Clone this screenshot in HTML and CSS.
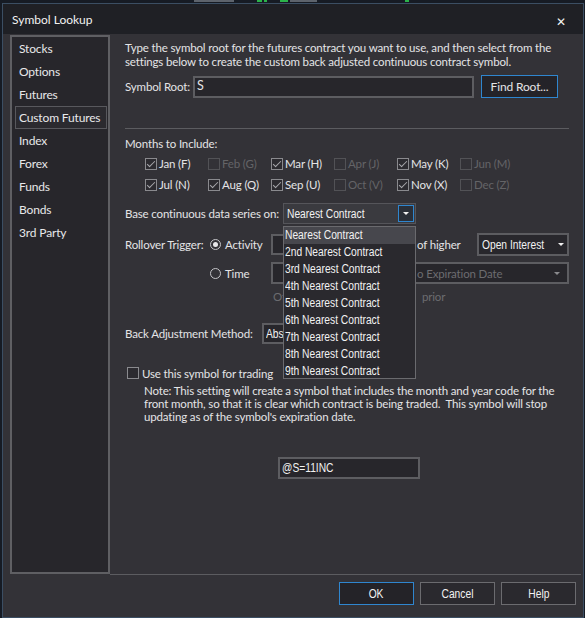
FILE: index.html
```html
<!DOCTYPE html>
<html>
<head>
<meta charset="utf-8">
<link rel="stylesheet" href="styles.css">
</head>
<body>
<div class="chart">
  <i class="g1"></i><i class="gr1"></i><i class="gr2"></i><i class="gr3"></i><i class="g2"></i><i class="gr4"></i>
</div>
<div class="dialog">
  <div class="titlebar">
    <span class="title">Symbol Lookup</span>
    <span class="close">✕</span>
  </div>
  <div class="wrap">
    <div class="main">
      <ul class="nav">
        <li>Stocks</li>
        <li>Options</li>
        <li>Futures</li>
        <li class="sel">Custom Futures</li>
        <li>Index</li>
        <li>Forex</li>
        <li>Funds</li>
        <li>Bonds</li>
        <li>3rd Party</li>
      </ul>
      <div class="content">
        <p class="intro">Type the symbol root for the futures contract you want to use, and then select from the<br>settings below to create the custom back adjusted continuous contract symbol.</p>
        <div class="row root-row">
          <span class="lbl-root">Symbol Root:</span>
          <div class="input root-input">S</div>
          <div class="btn btn-blue find">Find Root...</div>
        </div>
        <div class="sep"></div>
        <div class="months-lbl">Months to Include:</div>
        <div class="months">
          <div class="cbi"><span class="cb on"></span>Jan (F)</div>
          <div class="cbi dis"><span class="cb"></span>Feb (G)</div>
          <div class="cbi"><span class="cb on"></span>Mar (H)</div>
          <div class="cbi dis"><span class="cb"></span>Apr (J)</div>
          <div class="cbi"><span class="cb on"></span>May (K)</div>
          <div class="cbi dis"><span class="cb"></span>Jun (M)</div>
          <div class="cbi"><span class="cb on"></span>Jul (N)</div>
          <div class="cbi"><span class="cb on"></span>Aug (Q)</div>
          <div class="cbi"><span class="cb on"></span>Sep (U)</div>
          <div class="cbi dis"><span class="cb"></span>Oct (V)</div>
          <div class="cbi"><span class="cb on"></span>Nov (X)</div>
          <div class="cbi dis"><span class="cb"></span>Dec (Z)</div>
        </div>
        <div class="row base-row">
          <span class="lbl-base">Base continuous data series on:</span>
          <div class="select base-select">
            <span class="nf">Nearest Contract</span>
            <span class="drop-btn"><i class="arrow"></i></span>
          </div>
        </div>
        <div class="row roll-row">
          <span class="lbl-roll">Rollover Trigger:</span>
          <span class="radio-item"><span class="radio on"></span>Activity</span>
          <div class="input act-box"></div>
          <span class="ofhigher">of higher</span>
          <div class="select oi-select"><span class="nf">Open Interest</span><i class="arrow"></i></div>
        </div>
        <div class="row time-row">
          <span class="radio-item"><span class="radio"></span>Time</span>
          <div class="input time-box"><span class="dim">o Expiration Date</span><i class="arrow dim-arrow"></i></div>
        </div>
        <div class="row of-row">
          <span class="dim of">Of</span><span class="dim prior">prior</span>
        </div>
        <div class="row back-row">
          <span class="lbl-back">Back Adjustment Method:</span>
          <div class="input back-box"><span class="nf">Abs</span></div>
        </div>
        <div class="row use-row">
          <span class="cb"></span><span class="use-lbl">Use this symbol for trading</span>
        </div>
        <p class="note">Note: This setting will create a symbol that includes the month and year code for the<br>front month, so that it is clear which contract is being traded.&nbsp; This symbol will stop<br>updating as of the symbol's expiration date.</p>
        <div class="input sym-box"><span class="nf">@S=11INC</span></div>

        <ul class="dropdown">
          <li class="hl"><span class="nf">Nearest Contract</span></li>
          <li><span class="nf">2nd Nearest Contract</span></li>
          <li><span class="nf">3rd Nearest Contract</span></li>
          <li><span class="nf">4th Nearest Contract</span></li>
          <li><span class="nf">5th Nearest Contract</span></li>
          <li><span class="nf">6th Nearest Contract</span></li>
          <li><span class="nf">7th Nearest Contract</span></li>
          <li><span class="nf">8th Nearest Contract</span></li>
          <li><span class="nf">9th Nearest Contract</span></li>
        </ul>
      </div>
    </div>
    <div class="footer">
      <div class="btn btn-blue fbtn"><span class="nf">OK</span></div>
      <div class="btn fbtn"><span class="nf">Cancel</span></div>
      <div class="btn fbtn"><span class="nf">Help</span></div>
    </div>
  </div>
</div>
</body>
</html>
```
FILE: styles.css
```css
* { box-sizing: border-box; }
html, body { margin: 0; padding: 0; }
body {
  width: 585px;
  height: 618px;
  overflow: hidden;
  background: #161b24;
  font-family: Lato, "Liberation Sans", sans-serif;
  font-size: 11.5px;
  letter-spacing: -0.15px;
  color: #e4e4e6;
  white-space: nowrap;
}

.chart { height: 3px; display: flex; align-items: flex-start; padding-left: 194px; }
.chart i { display: block; height: 2px; }
.chart .g1 { width: 40px; background: #5d636c; }
.chart .gr1 { width: 5px; margin-left: 23px; background: #2bb34a; }
.chart .gr2 { width: 3px; margin-left: 2px; background: #2bb34a; }
.chart .gr3 { width: 8px; margin-left: 13px; background: #2bb34a; }
.chart .g2 { width: 27px; margin-left: 2px; background: #5d636c; }
.chart .gr4 { width: 4px; margin-left: 88px; background: #2bb34a; }

.dialog {
  margin-left: 2px;
  width: 582px;
  height: 615px;
  border: 1px solid #3b4e63;
  background: #333237;
  display: flex;
  flex-direction: column;
}

.titlebar {
  height: 30px;
  flex: none;
  background: #1f2025;
  display: flex;
  align-items: center;
  justify-content: space-between;
  padding: 0 17px 0 9px;
}
.title { color: #f2f2f2; margin-top: 1px; font-size: 12px; letter-spacing: 0; }
.close { font-size: 12px; font-weight: bold; color: #f2f2f2; font-family: "DejaVu Sans", sans-serif; margin-top: 6px; }

.wrap { flex: 1; padding: 1px 2px 0 7px; display: flex; flex-direction: column; }
.main { display: flex; height: 540px; flex: none; }

.nav {
  width: 100px;
  height: 539px;
  flex: none;
  border: 2px solid #5f5f63;
  background: #27262b;
  list-style: none;
  margin: 0;
  padding: 0;
  font-size: 12px;
}
.nav li {
  height: 23px;
  line-height: 21px;
  margin: 0 1px 0 3px;
  padding-left: 3px;
  border: 1px solid transparent;
  color: #e8e8ea;
}
.nav li.sel { border-color: #58585d; background: #2b2a2f; }

.content {
  flex: 1;
  position: relative;
  border-bottom: 1px solid #5c5c60;
  padding: 6px 12px 0 15px;
}

.nf {
  display: inline-block;
  font-family: "Liberation Sans", sans-serif;
  font-size: 12.5px;
  letter-spacing: 0;
  color: #f2f2f2;
  transform: scaleX(0.82);
  transform-origin: left center;
}

.intro { margin: 0; line-height: 14px; }

.row { display: flex; align-items: center; }
.row > * { flex: none; }

.input {
  background: #27262b;
  border: 2px solid #5d5d61;
  display: flex;
  align-items: center;
}

.root-row { margin-top: 6px; height: 23px; }
.lbl-root { width: 68px; }
.root-input { width: 281px; height: 22px; padding-left: 2px; padding-bottom: 2px; font-size: 12.5px; }

.btn {
  border: 1px solid #6b6b6f;
  background: #2a292e;
  display: flex;
  align-items: center;
  justify-content: center;
}
.btn-blue { border-color: #2f86cf; background: #242328; }
.find { width: 77px; height: 23px; margin-left: 7px; font-size: 12px; }

.sep { height: 1px; background: #5c5c60; margin-top: 30px; }

.months-lbl { margin-top: 8px; line-height: 14px; }
.months {
  margin-top: 2px;
  padding-left: 20px;
  display: grid;
  grid-template-columns: repeat(6, 63px);
  grid-auto-rows: 21px;
}
.cbi { display: flex; align-items: center; }
.cbi.dis { color: #646467; }

.cb {
  width: 12px;
  height: 12px;
  border: 1px solid #8a8a8e;
  background: #2c2b30;
  margin-right: 2px;
  position: relative;
  flex: none;
}
.cbi.dis .cb { border-color: #525256; background: transparent; }
.cb.on::after {
  content: "";
  position: absolute;
  left: 3px;
  top: 0px;
  width: 3px;
  height: 7px;
  border-right: 1.5px solid #a9a9ad;
  border-bottom: 1.5px solid #a9a9ad;
  transform: rotate(45deg);
}

.base-row { margin-top: 8px; height: 21px; }
.lbl-base { width: 158px; }
.select {
  display: flex;
  align-items: center;
  position: relative;
}
.base-select {
  width: 133px;
  height: 21px;
  background: #3a3a3f;
  border: 1px solid #55555a;
  padding-left: 3px;
}
.drop-btn {
  position: absolute;
  right: 1px;
  top: 1px;
  width: 16px;
  height: 17px;
  border: 1px solid #2f86cf;
  background: #2a2f38;
  display: flex;
  align-items: center;
  justify-content: center;
}
.arrow {
  display: block;
  width: 0;
  height: 0;
  border-left: 3px solid transparent;
  border-right: 3px solid transparent;
  border-top: 3px solid #f0f0f0;
}

.roll-row { margin-top: 9px; height: 23px; }
.lbl-roll { width: 85px; }
.radio-item { width: 61px; display: flex; align-items: center; }
.radio {
  width: 11px;
  height: 11px;
  border: 1px solid #c4c4c8;
  border-radius: 50%;
  margin-right: 4px;
  display: flex;
  align-items: center;
  justify-content: center;
  flex: none;
}
.radio.on::after {
  content: "";
  width: 5px;
  height: 5px;
  border-radius: 50%;
  background: #e8e8ea;
}
.act-box { width: 140px; height: 21px; }
.ofhigher { margin-left: 6px; width: 60px; }
.oi-select {
  width: 92px;
  height: 23px;
  background: #28272c;
  border: 2px solid #5c5c60;
  padding-left: 3px;
  justify-content: space-between;
  padding-right: 6px;
}

.time-row { margin-top: 6px; height: 22px; padding-left: 85px; }
.time-box {
  width: 298px;
  height: 22px;
  padding-left: 144px;
  padding-right: 7px;
  justify-content: space-between;
}
.dim { color: #6c6c70; }
.arrow.dim-arrow { border-top-color: #8a8a8e; }

.of-row { margin-top: 6px; height: 14px; line-height: 14px; }
.of { margin-left: 148px; }
.prior { margin-left: 136px; }

.back-row { margin-top: 19px; height: 21px; }
.lbl-back { width: 137px; }
.back-box { width: 150px; height: 21px; padding-left: 2px; }

.use-row { margin-top: 22px; height: 14px; padding-left: 2px; }
.use-lbl { margin-left: 1px; }

.note { margin: 4px 0 0 19px; line-height: 13px; }

.sym-box { margin: 34px 0 0 153px; width: 142px; height: 22px; padding-left: 2px; padding-bottom: 1px; }

.dropdown {
  position: absolute;
  left: 173px;
  top: 191px;
  width: 133px;
  height: 153px;
  margin: 0;
  padding: 0;
  list-style: none;
  background: #2a292e;
  border: 1px solid #6a6a6e;
}
.dropdown li {
  height: 17px;
  line-height: 16px;
  padding-left: 1px;
}
.dropdown li.hl { background: #47474d; }

.footer {
  display: flex;
  justify-content: flex-end;
  gap: 6px;
  padding: 7px 5px 0 0;
}
.fbtn { width: 75px; height: 23px; }
.fbtn .nf { transform-origin: center center; }
```
